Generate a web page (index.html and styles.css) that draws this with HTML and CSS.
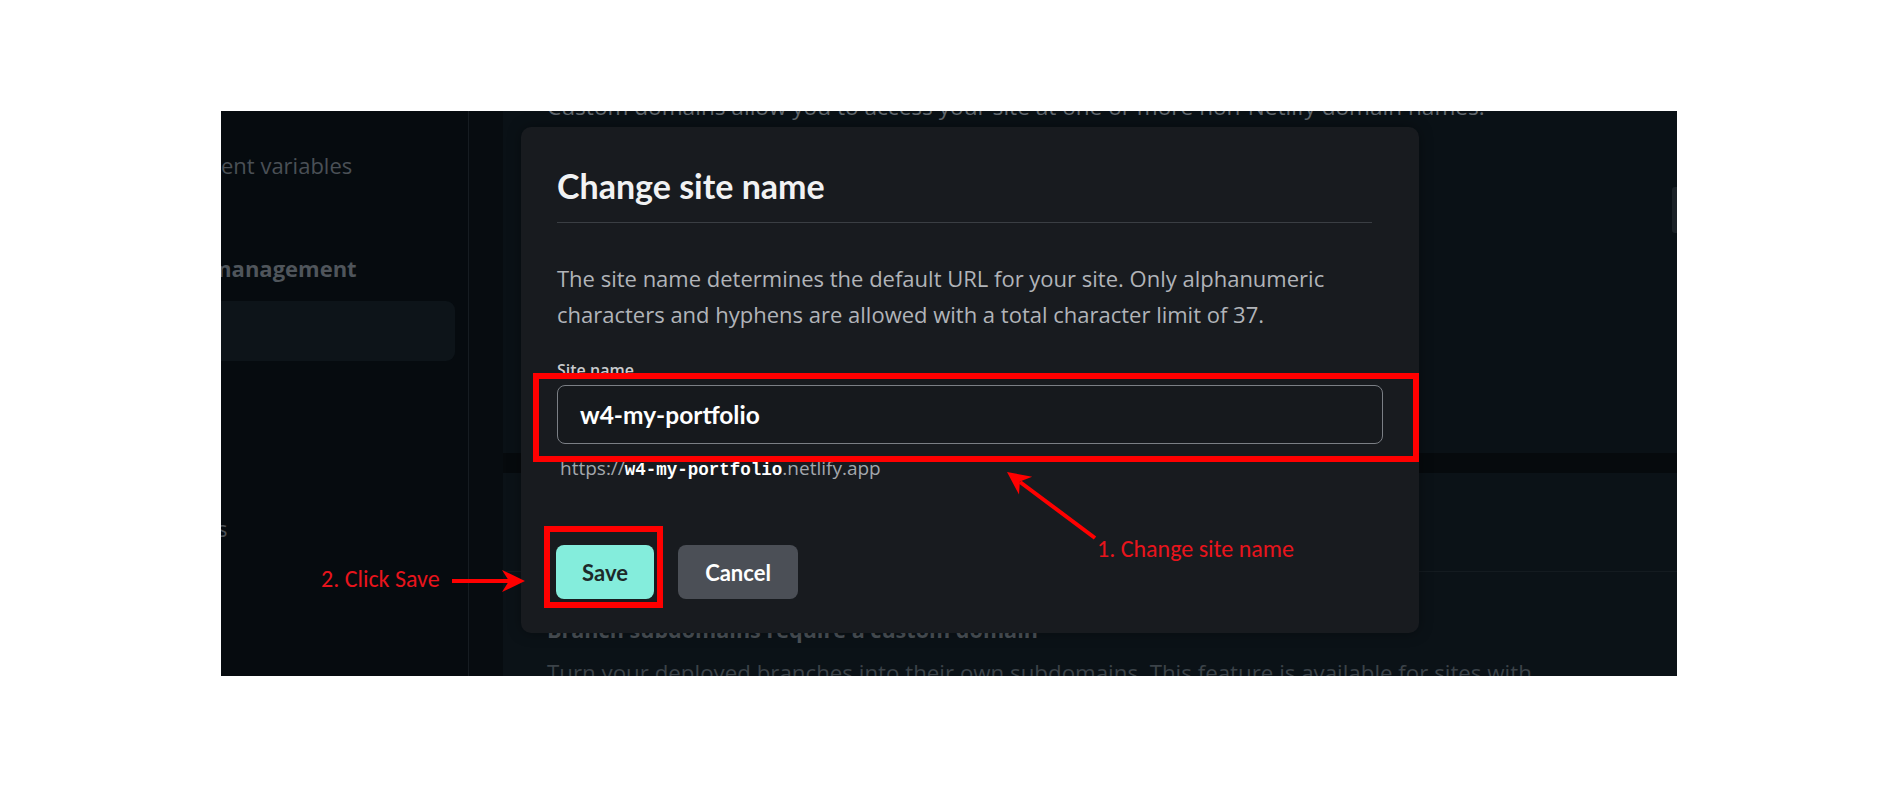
FILE: index.html
```html
<!DOCTYPE html>
<html lang="en">
<head>
<meta charset="utf-8">
<title>Change site name</title>
<link rel="stylesheet" href="styles.css">
</head>
<body>
<div class="page">
  <div class="shot">
    <aside class="sidebar">
      <div class="nav-item nav-first">ent variables</div>
      <div class="nav-head">management</div>
      <div class="nav-active"></div>
      <div class="nav-item nav-last">s</div>
    </aside>
    <div class="gutter"></div>
    <main class="main">
      <section class="card card-a">
        <p class="top-text">Custom domains allow you to access your site at one or more non-Netlify domain names.</p>
        <div class="knob"></div>
      </section>
      <div class="band"></div>
      <section class="card card-b">
        <div class="card-head"></div>
        <h3 class="card-title">Branch subdomains require a custom domain</h3>
        <p class="card-text">Turn your deployed branches into their own subdomains. This feature is available for sites with</p>
      </section>
    </main>

    <div class="modal">
      <h2 class="modal-title">Change site name</h2>
      <div class="modal-rule"></div>
      <p class="modal-text">The site name determines the default URL for your site. Only alphanumeric characters and hyphens are allowed with a total character limit of 37.</p>
      <label class="field-label">Site name</label>
      <div class="field">w4-my-portfolio</div>
      <div class="url">https://<code class="url-name">w4-my-portfolio</code>.netlify.app</div>
      <div class="actions">
        <button class="btn btn-save">Save</button>
        <button class="btn btn-cancel">Cancel</button>
      </div>
    </div>
  </div>

  <div class="mark mark-input"></div>
  <div class="mark mark-save"></div>
  <div class="note note-save">2. Click Save</div>
  <div class="note note-name">1. Change site name</div>
  <svg class="arrows" width="1897" height="787" viewBox="0 0 1897 787">
    <line x1="452" y1="581" x2="510" y2="581" stroke="#ff0000" stroke-width="4"/>
    <polygon points="525,581 502,570 509,581 502,592" fill="#ff0000"/>
    <line x1="1095" y1="538" x2="1020" y2="482" stroke="#ff0000" stroke-width="4"/>
    <polygon points="1007,472 1032.2,476.8 1019.9,481.6 1019,494.6" fill="#ff0000"/>
  </svg>
</div>
</body>
</html>
```
FILE: styles.css
```css
* { box-sizing: border-box; }
html, body { margin: 0; padding: 0; background: #ffffff; }
body { font-family: "Open Sans", "Noto Sans", sans-serif; }

.page {
  position: relative;
  width: 1897px;
  height: 787px;
  overflow: hidden;
  padding: 111px 0 0 221px;
}

.shot {
  position: relative;
  width: 1456px;
  height: 565px;
  overflow: hidden;
  display: flex;
  background: #070c10;
}

/* sidebar */
.sidebar {
  width: 248px;
  flex: none;
  background: #060b0f;
  border-right: 1px solid #161c21;
  display: flex;
  flex-direction: column;
}
.nav-item {
  font-size: 22px;
  line-height: 30px;
  color: #4a5056;
  white-space: nowrap;
}
.nav-first { margin-top: 39px; margin-left: 0; }
.nav-head {
  margin-top: 73px;
  margin-left: -11px;
  font-size: 22px;
  line-height: 30px;
  font-weight: 700;
  color: #4f555b;
  white-space: nowrap;
}
.nav-active {
  margin-top: 18px;
  width: 234px;
  height: 60px;
  background: #0d1419;
  border-radius: 0 9px 9px 0;
}
.nav-last { margin-top: 152px; margin-left: -4px; }

.gutter {
  width: 34px;
  flex: none;
  background: #070c10;
}

/* main */
.main {
  flex: 1;
  display: flex;
  flex-direction: column;
  background: #070c10;
}
.card {
  display: flow-root;
  background: #0a1116;
  padding-left: 44px;
}
.card-a {
  height: 342px;
  flex: none;
  position: relative;
}
.top-text {
  margin: -19px 0 0 0;
  font-size: 22.6px;
  line-height: 30px;
  color: #62686e;
  white-space: nowrap;
}
.knob {
  position: absolute;
  right: 0;
  top: 76px;
  width: 5px;
  height: 46px;
  border-radius: 3px 0 0 3px;
  background: #1b2227;
}
.band {
  height: 20px;
  flex: none;
  background: #060a0d;
}
.card-b {
  flex: 1;
  background: #0b1217;
}
.card-head {
  height: 99px;
  margin-left: -44px;
  border-bottom: 1px solid #141b20;
}
.card-title {
  margin: 43px 0 0 0;
  font-size: 21.6px;
  line-height: 30px;
  font-weight: 700;
  color: #4c5258;
  white-space: nowrap;
}
.card-text {
  margin: 13px 0 0 0;
  font-size: 22.3px;
  line-height: 30px;
  color: #3c4349;
  white-space: nowrap;
}

/* modal */
.modal {
  position: absolute;
  left: 300px;
  top: 16px;
  width: 898px;
  height: 506px;
  background: #181b1f;
  border-radius: 10px;
  padding: 39px 36px 36px 36px;
  box-shadow: 0 0 14px rgba(0, 0, 0, 0.35);
}
.modal-title {
  margin: 0;
  font-family: "Lato", "Open Sans", sans-serif;
  font-size: 34px;
  line-height: 40px;
  font-weight: 700;
  color: #f1f2f3;
}
.modal-rule {
  margin: 16px 11px 0 0;
  height: 1px;
  background: #3a3e43;
}
.modal-text {
  margin: 37px 0 0 0;
  font-size: 22px;
  line-height: 36px;
  color: #b1b4b9;
  max-width: 826px;
}
.field-label {
  display: block;
  margin-top: 27px;
  font-size: 16px;
  line-height: 22px;
  font-weight: 600;
  color: #c9cbce;
}
.field {
  margin-top: 4px;
  width: 826px;
  height: 59px;
  border: 1px solid #7b7f85;
  border-radius: 8px;
  background: #16191d;
  padding-left: 22px;
  font-family: "Lato", "Open Sans", sans-serif;
  font-size: 24.5px;
  line-height: 57px;
  font-weight: 700;
  color: #ffffff;
}
.url {
  margin: 11px 0 0 3px;
  font-size: 19px;
  line-height: 26px;
  color: #a3a7ac;
}
.url-name {
  font-family: "Liberation Mono", "DejaVu Sans Mono", monospace;
  font-size: 17.5px;
  font-weight: 700;
  color: #ffffff;
}
.actions {
  margin-top: 62px;
  margin-left: -1px;
  display: flex;
  gap: 24px;
}
.btn {
  height: 54px;
  border: none;
  border-radius: 8px;
  font-family: "Lato", "Open Sans", sans-serif;
  font-size: 22px;
  font-weight: 700;
  padding: 0;
}
.btn-save {
  width: 98px;
  background: #84eddc;
  color: #1d2a2a;
}
.btn-cancel {
  width: 120px;
  background: #4b4f56;
  color: #ffffff;
}

/* annotations */
.mark {
  position: absolute;
  border: 6px solid #ff0000;
}
.mark-input { left: 533px; top: 373px; width: 886px; height: 89px; }
.mark-save { left: 544px; top: 526px; width: 119px; height: 82px; }
.note {
  position: absolute;
  font-family: "Carlito", "Lato", sans-serif;
  font-size: 24px;
  line-height: 28px;
  color: #e8141c;
  white-space: nowrap;
}
.note-save { left: 321px; top: 565px; }
.note-name { left: 1097px; top: 535px; }
.arrows {
  position: absolute;
  left: 0;
  top: 0;
  pointer-events: none;
}
```
